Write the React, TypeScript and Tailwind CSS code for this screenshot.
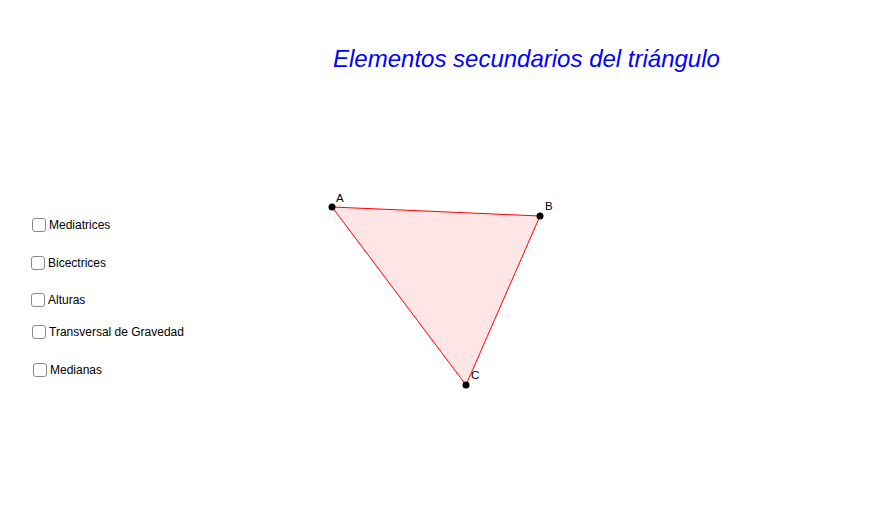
import React from "react";

const boxes = [
  { label: "Mediatrices", x: 32, y: 225 },
  { label: "Bicectrices", x: 31, y: 263 },
  { label: "Alturas", x: 31, y: 300 },
  { label: "Transversal de Gravedad", x: 32, y: 332 },
  { label: "Medianas", x: 33, y: 370 },
];

export default function App() {
  return (
    <div className="relative w-[892px] h-[513px] bg-white overflow-hidden" style={{ fontFamily: '"Liberation Sans", Arial, sans-serif' }}>
      <svg className="absolute left-0 top-0" width="892" height="513" viewBox="0 0 892 513">
        <polygon points="332,207 540,216 466,385" fill="#ffe5e5" stroke="#ff0000" strokeWidth="1" />
        <circle cx="332" cy="207" r="3.5" fill="#000" />
        <circle cx="540" cy="216" r="3.5" fill="#000" />
        <circle cx="466" cy="385" r="3.5" fill="#000" />
        <text x="336" y="202" fontSize="11.5" fontFamily="Liberation Sans, Arial, sans-serif" fill="#000">A</text>
        <text x="545" y="210" fontSize="11.5" fontFamily="Liberation Sans, Arial, sans-serif" fill="#000">B</text>
        <text x="471" y="379" fontSize="11.5" fontFamily="Liberation Sans, Arial, sans-serif" fill="#000">C</text>
      </svg>
      <div className="absolute left-[333px] top-[43px] text-[24px] italic text-[#0000ff] leading-[32px] whitespace-nowrap">
        Elementos secundarios del triángulo
      </div>
      {boxes.map((b) => (
        <label
          key={b.label}
          className="absolute flex items-center gap-[3px] text-[12px] text-black whitespace-nowrap"
          style={{ left: b.x, top: b.y - 7 }}
        >
          <span className="block w-[14px] h-[14px] rounded-[3px] border border-[#8a8a8a] bg-white" />
          <span className="leading-[14px]">{b.label}</span>
        </label>
      ))}
    </div>
  );
}
